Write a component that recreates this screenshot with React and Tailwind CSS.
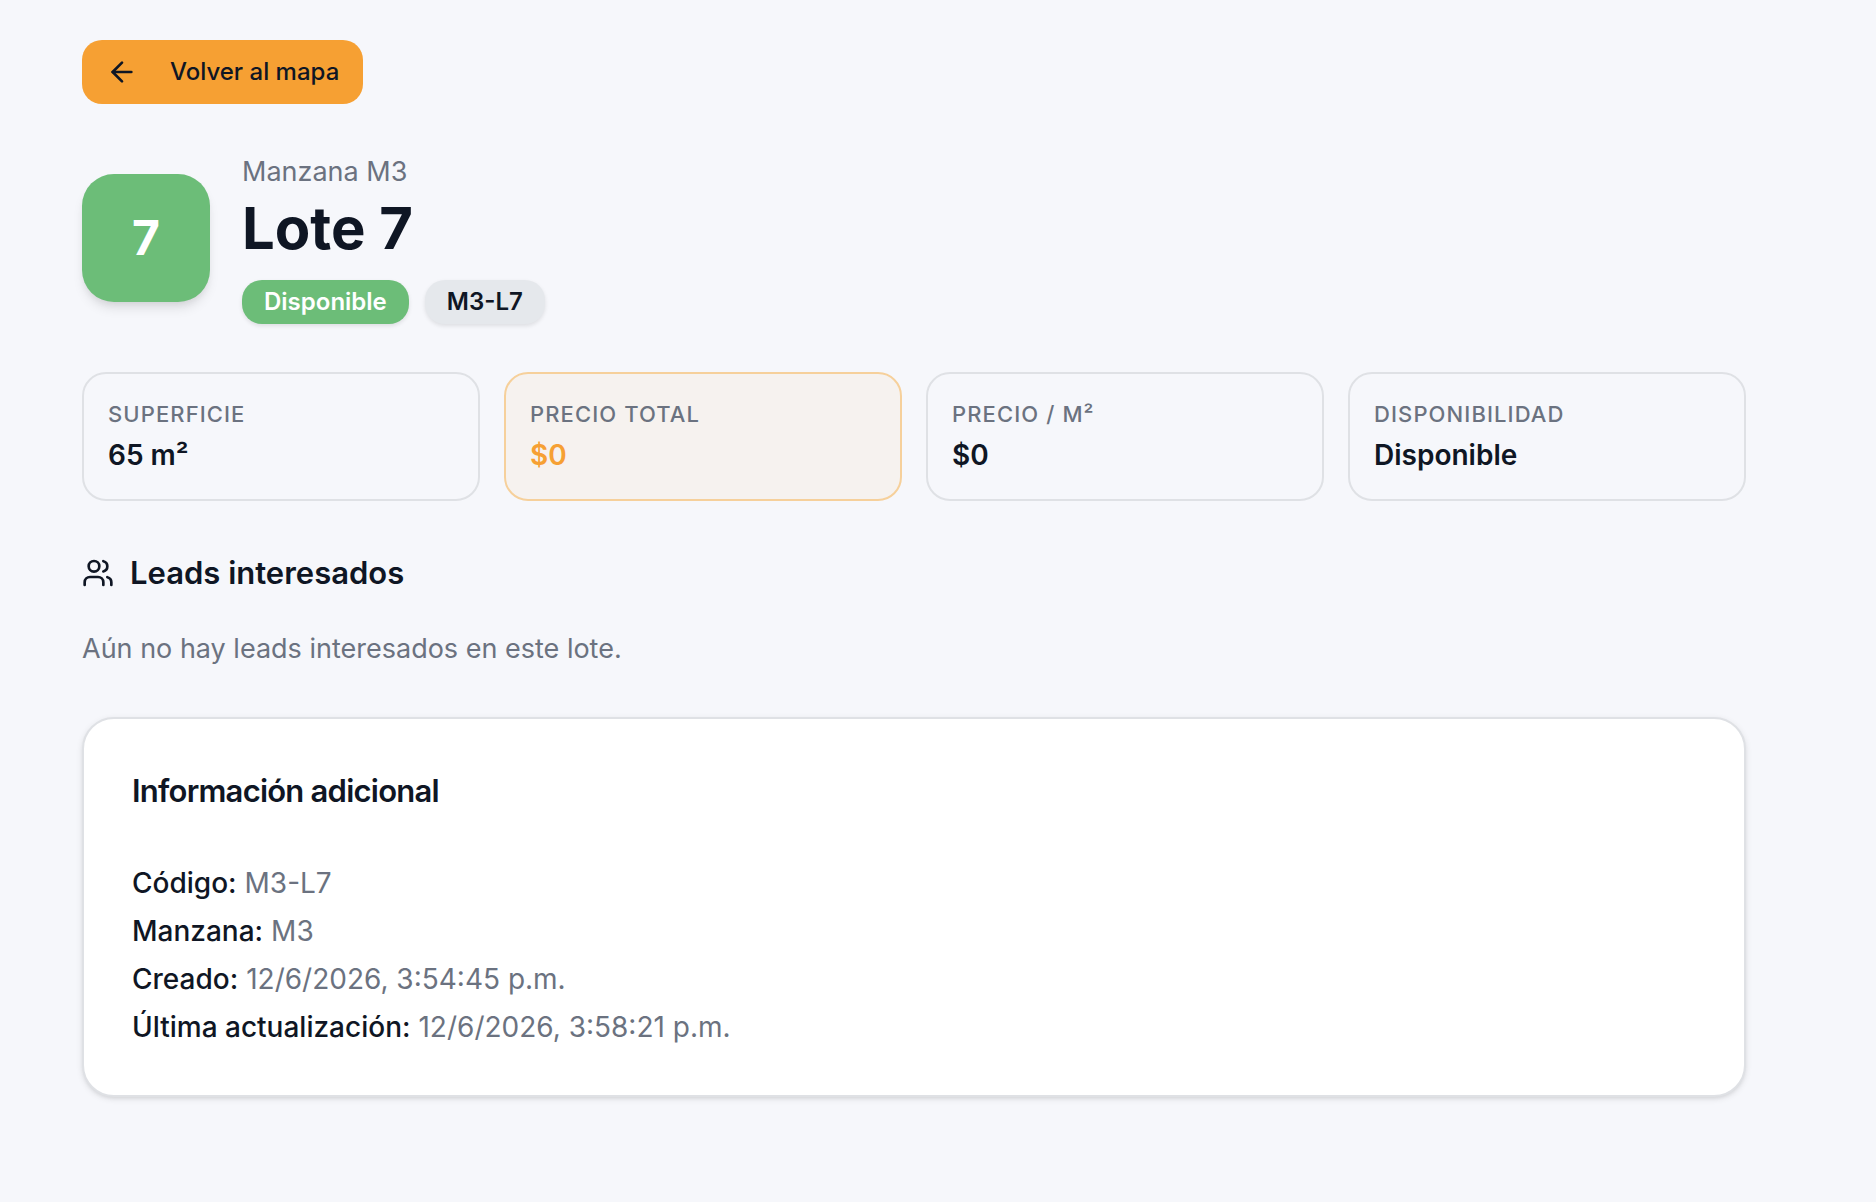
import { ArrowLeft, Users } from 'lucide-react';
import clsx from 'clsx';

const lote = {
  numero: 7,
  codigo: 'M3-L7',
  manzana: 'M3',
  estado: 'Disponible',
  creado: '12/6/2026, 3:54:45 p.m.',
  actualizado: '12/6/2026, 3:58:21 p.m.',
};

const STATS = [
  { label: 'Superficie', value: '65 m²' },
  { label: 'Precio total', value: '$0', highlight: true },
  { label: 'Precio / m²', value: '$0' },
  { label: 'Disponibilidad', value: lote.estado },
];

const INFO = [
  { label: 'Código:', value: lote.codigo },
  { label: 'Manzana:', value: lote.manzana },
  { label: 'Creado:', value: lote.creado },
  { label: 'Última actualización:', value: lote.actualizado },
];

const Badge = ({ className, children }) => (
  <span
    className={clsx(
      'inline-flex items-center rounded-[20px] border-2 border-transparent bg-origin-border px-5 py-1 text-2xl font-semibold shadow-[0_2px_4px_rgba(0,0,0,0.1)]',
      className
    )}
  >
    {children}
  </span>
);

const StatCard = ({ label, value, highlight }) => (
  <div
    className={clsx(
      'rounded-3xl border-2 p-6',
      highlight ? 'border-[#f6d09b] bg-[#f6f2ef]' : 'border-[#dfe1e5]'
    )}
  >
    <dt className="text-[22px] leading-[33px] font-medium tracking-wider text-[#6b7280] uppercase">
      {label}
    </dt>
    <dd
      className={clsx(
        'mt-1 text-[28px] leading-10 font-semibold',
        highlight && 'text-[#f6a033]'
      )}
    >
      {value}
    </dd>
  </div>
);

const App = () => (
  <main className="min-h-screen bg-[#f6f7fb] pt-10 pr-[130px] pb-16 pl-[82px] font-['Inter',sans-serif] text-[#0f1624]">
    <button
      type="button"
      className="flex h-16 items-center gap-8 rounded-[20px] bg-[#f6a033] px-6 text-2xl font-medium"
    >
      <ArrowLeft className="size-8" aria-hidden="true" />
      Volver al mapa
    </button>

    {/* Encabezado */}
    <header className="mt-12 flex items-center gap-8">
      <div className="flex size-32 shrink-0 items-center justify-center rounded-[32px] bg-[#6cbd78] text-5xl font-bold text-white shadow-[0_8px_12px_-2px_rgba(0,0,0,0.1),0_4px_8px_-4px_rgba(0,0,0,0.1)]">
        {lote.numero}
      </div>
      <div>
        <p className="text-[27px] leading-10 text-[#6b7280]">Manzana {lote.manzana}</p>
        <h1 className="text-[58px] leading-[72px] font-bold">Lote {lote.numero}</h1>
        <div className="mt-4 flex flex-wrap gap-4">
          <Badge className="bg-[#6cbd78] text-white">{lote.estado}</Badge>
          <Badge className="bg-[#e5e8ec]">{lote.codigo}</Badge>
        </div>
      </div>
    </header>

    {/* Métricas */}
    <dl className="mt-12 grid grid-cols-4 gap-6">
      {STATS.map((stat) => (
        <StatCard key={stat.label} {...stat} />
      ))}
    </dl>

    {/* Leads */}
    <section className="mt-12">
      <h2 className="flex items-center gap-4 text-[31px] leading-[48px] font-semibold">
        <Users className="size-8" aria-hidden="true" />
        Leads interesados
      </h2>
      <p className="mt-8 text-[27px] leading-10 text-[#6b7280]">
        Aún no hay leads interesados en este lote.
      </p>
    </section>

    {/* Información adicional */}
    <section className="mt-12 rounded-[32px] border-2 border-[#dfe1e5] bg-white p-12 shadow-[0_2px_6px_rgba(0,0,0,0.1),0_2px_4px_-2px_rgba(0,0,0,0.1)]">
      <h2 className="text-[31px] leading-[48px] font-semibold tracking-tight">
        Información adicional
      </h2>
      <dl className="mt-12 space-y-2 text-[28px] leading-10">
        {INFO.map(({ label, value }) => (
          <div key={label} className="flex gap-2">
            <dt className="font-medium">{label}</dt>
            <dd className="text-[#6b7280]">{value}</dd>
          </div>
        ))}
      </dl>
    </section>
  </main>
);

export default App;
